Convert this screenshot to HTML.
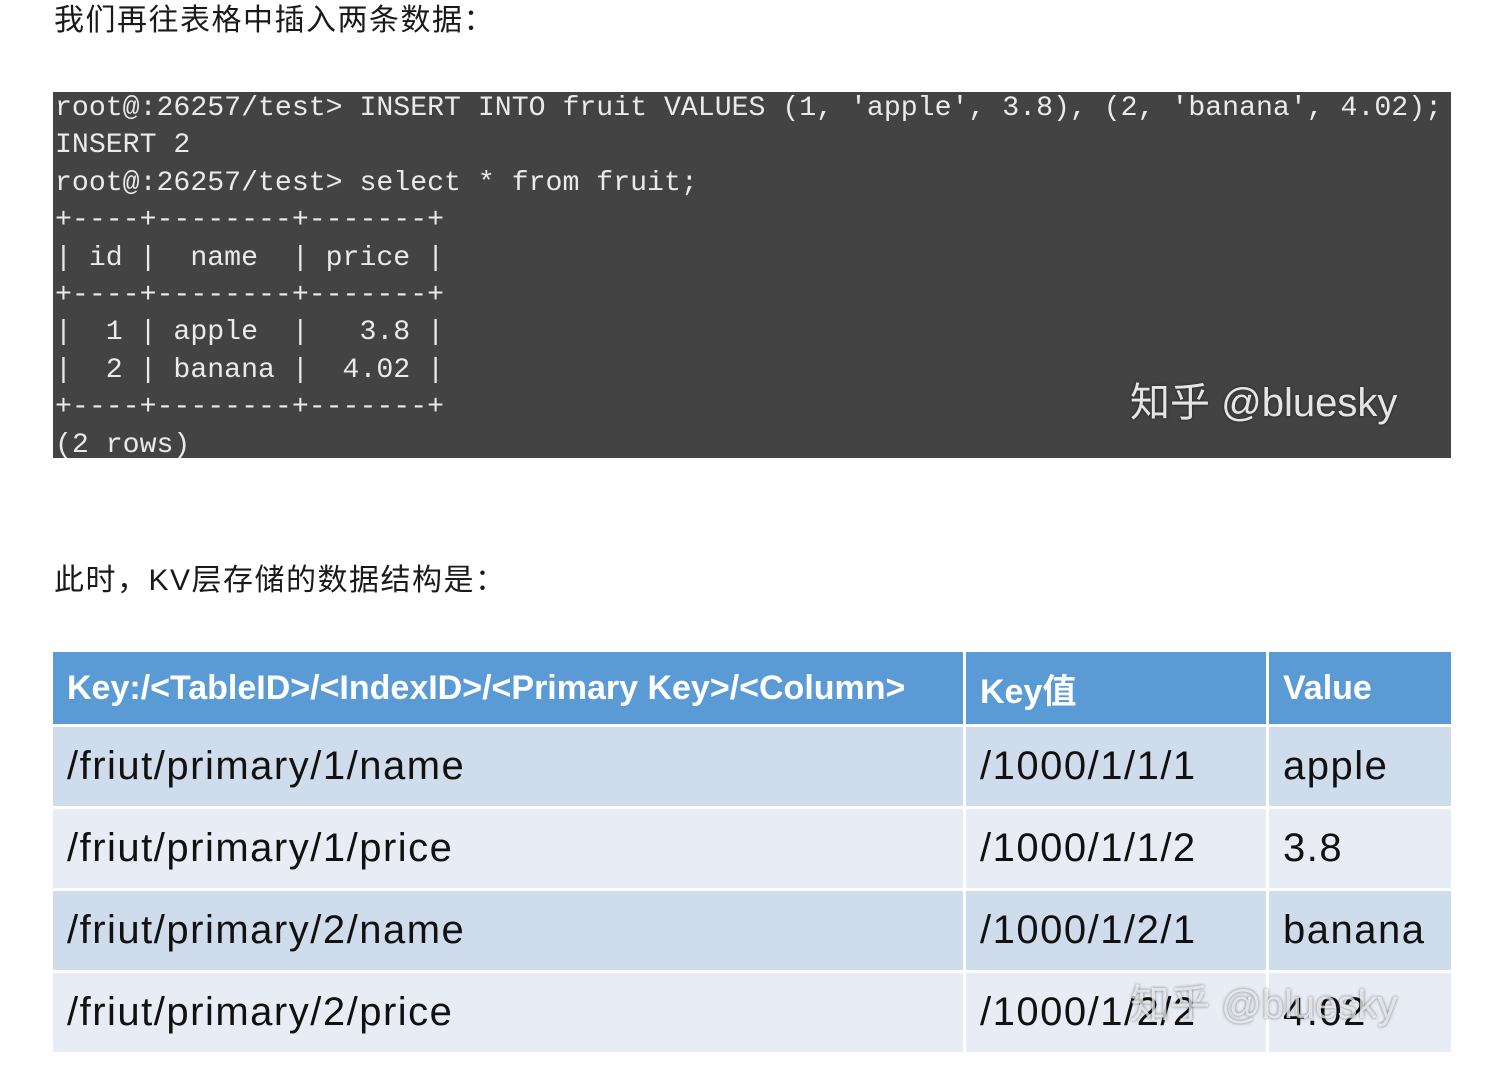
<!DOCTYPE html>
<html><head><meta charset="utf-8"><style>
html,body{margin:0;padding:0;background:#fff;width:1500px;height:1082px;overflow:hidden;position:relative;font-family:"Liberation Sans","Noto Sans CJK SC",sans-serif;}
.p{position:absolute;left:54px;font-size:30px;letter-spacing:1.5px;color:#1a1a1a;line-height:1;}
.term{position:absolute;left:53px;top:92px;width:1398px;height:366px;background:#434343;}
.term pre{margin:0;position:absolute;left:2px;top:-2px;font-family:"Liberation Mono",monospace;font-size:28.2px;line-height:37.4px;color:#eaeaea;letter-spacing:0;}
.wm{position:absolute;font-size:40px;color:rgba(255,255,255,0.88);font-family:"Liberation Sans","Noto Sans CJK SC",sans-serif;text-shadow:0 0 3px rgba(0,0,0,.5);}
table{position:absolute;left:53px;top:652px;width:1398px;border-collapse:collapse;}
td{border:3px solid #fff;padding:0 0 0 14px;font-size:40px;letter-spacing:1.5px;color:#111;height:79px;}
tr.h td{background:#5b9bd5;color:#fff;font-weight:bold;font-size:34px;letter-spacing:0;height:72px;border-top:none;}
tr.a td{background:#cfdcec;}
tr.b td{background:#e8edf5;}
td:first-child{border-left:none}td:last-child{border-right:none}
</style></head><body>
<div class="p" style="top:6px">我们再往表格中插入两条数据：</div>
<div class="term"><pre>root@:26257/test&gt; INSERT INTO fruit VALUES (1, 'apple', 3.8), (2, 'banana', 4.02);
INSERT 2
root@:26257/test&gt; select * from fruit;
+----+--------+-------+
| id |  name  | price |
+----+--------+-------+
|  1 | apple  |   3.8 |
|  2 | banana |  4.02 |
+----+--------+-------+
(2 rows)</pre>
<div class="wm" style="left:1077px;top:278px">知乎 @bluesky</div></div>
<div class="p" style="top:566px">此时，KV层存储的数据结构是：</div>
<table>
<tr class="h"><td style="width:896px">Key:/&lt;TableID&gt;/&lt;IndexID&gt;/&lt;Primary Key&gt;/&lt;Column&gt;</td><td style="width:286px">Key值</td><td>Value</td></tr>
<tr class="a"><td>/friut/primary/1/name</td><td>/1000/1/1/1</td><td>apple</td></tr>
<tr class="b"><td>/friut/primary/1/price</td><td>/1000/1/1/2</td><td>3.8</td></tr>
<tr class="a"><td>/friut/primary/2/name</td><td>/1000/1/2/1</td><td>banana</td></tr>
<tr class="b"><td>/friut/primary/2/price</td><td>/1000/1/2/2</td><td>4.02</td></tr>
</table>
<div class="wm" style="left:1130px;top:972px;color:rgba(255,255,255,0.7)">知乎 @bluesky</div>
</body></html>
